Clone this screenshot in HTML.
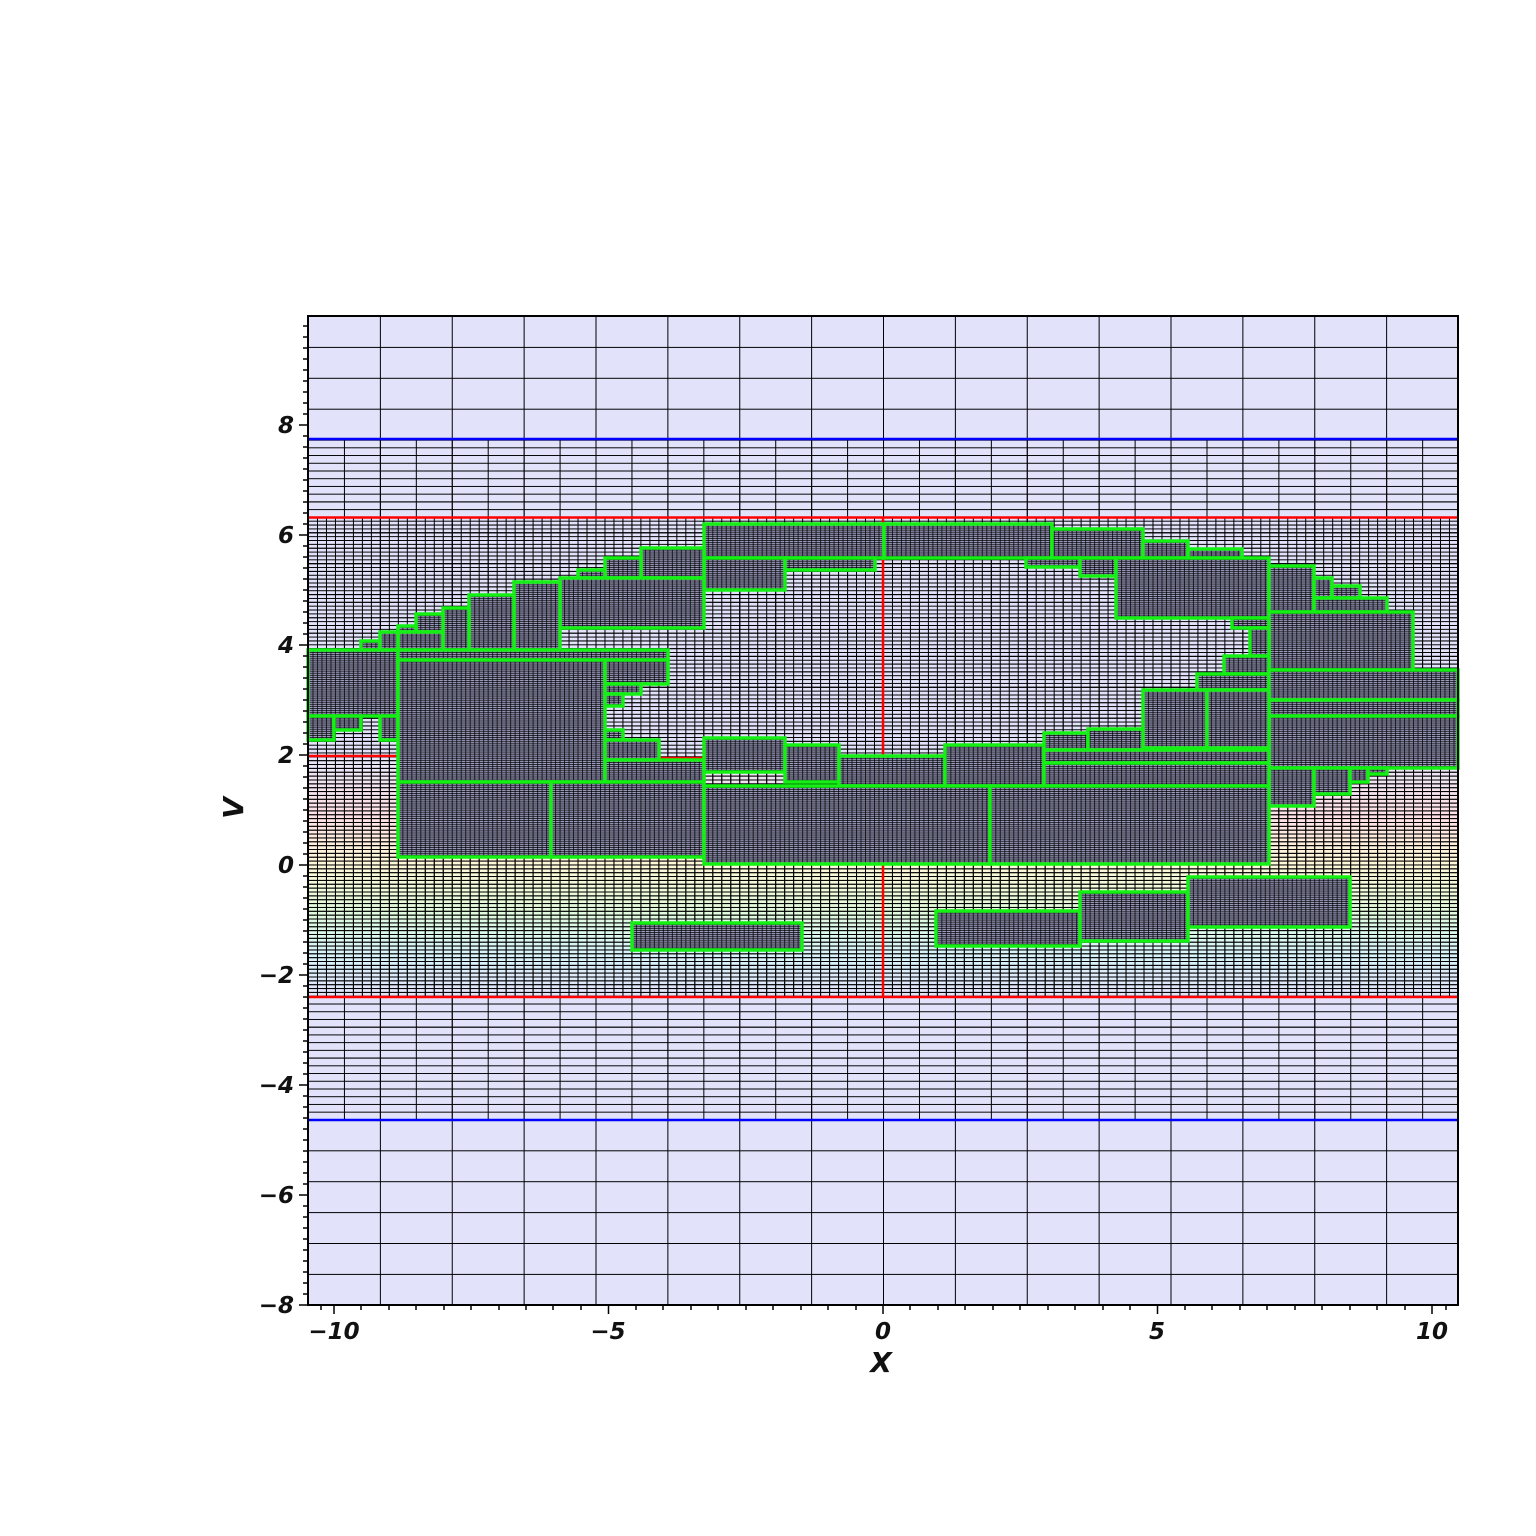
<!DOCTYPE html>
<html><head><meta charset="utf-8"><style>
html,body{margin:0;padding:0;background:#fff;}
svg{display:block}
text{font-family:"DejaVu Sans","Liberation Sans",sans-serif;font-weight:bold;font-style:italic;fill:#111}
</style></head><body>
<svg width="1536" height="1536" viewBox="0 0 1536 1536" xmlns="http://www.w3.org/2000/svg">
<defs>
<pattern id="pc" patternUnits="userSpaceOnUse" x="308" y="316" width="71.875" height="30.9">
<rect width="71.875" height="30.9" fill="#e2e2fb"/>
<path d="M0.5 0V30.9M0 0.5H71.875" stroke="#000" stroke-width="1.3" fill="none" shape-rendering="crispEdges"/>
</pattern>
<pattern id="pm" patternUnits="userSpaceOnUse" x="308" y="316" width="35.94" height="7.725">
<path d="M0.5 0V7.725M0 0.5H35.94" stroke="#000" stroke-width="1.2" fill="none" shape-rendering="crispEdges"/>
</pattern>
<pattern id="pf" patternUnits="userSpaceOnUse" x="308" y="316" width="8.984" height="3.8625">
<path d="M0.5 0V3.8625M0 0.5H8.984" stroke="#000" stroke-width="1.1" fill="none" shape-rendering="crispEdges"/>
</pattern>
<pattern id="pg" patternUnits="userSpaceOnUse" x="308" y="316" width="4.492" height="1.931">
<rect width="4.492" height="1.931" fill="#a0a0c4"/>
<path d="M0.5 0V1.931M0 0.5H4.492" stroke="#000" stroke-width="0.75" fill="none"/>
</pattern>
<linearGradient id="lg" x1="0" y1="755" x2="0" y2="997" gradientUnits="userSpaceOnUse">
<stop offset="0" stop-color="#e6e6fb"/>
<stop offset="0.25" stop-color="#ffe0e6"/>
<stop offset="0.45" stop-color="#fff8d8"/>
<stop offset="0.65" stop-color="#e0fbdc"/>
<stop offset="0.82" stop-color="#d8f4fb"/>
<stop offset="1" stop-color="#e2e2fb"/>
</linearGradient>
</defs>
<rect x="308" y="316" width="1150" height="989" fill="url(#pc)"/>
<rect x="308" y="439" width="1150" height="681" fill="url(#pm)"/>
<rect x="308" y="755" width="1150" height="242" fill="url(#lg)"/>
<rect x="308" y="755" width="1150" height="242" fill="url(#pf)"/>
<rect x="308" y="517" width="1150" height="480" fill="url(#pf)"/>
<g stroke="#ff0000" stroke-width="2.5" fill="none">
<path d="M308 517.5H1458M308 997H1458M883 517V997M308 756H400M660 758H704"/>
</g>
<g stroke="#0000ff" stroke-width="2.5"><path d="M308 439H1458M308 1120H1458"/></g>
<g fill="url(#pg)" stroke="#14f014" stroke-width="3.5">
<rect x="704" y="524" width="180" height="34"/>
<rect x="884" y="524" width="168" height="34"/>
<rect x="1052" y="529" width="91" height="29"/>
<rect x="1143" y="541" width="45" height="17"/>
<rect x="1188" y="549" width="54" height="9"/>
<rect x="704" y="558" width="81" height="32"/>
<rect x="785" y="558" width="90" height="12"/>
<rect x="1026" y="558" width="54" height="9"/>
<rect x="1080" y="558" width="36" height="18"/>
<rect x="1116" y="558" width="153" height="60"/>
<rect x="1232" y="618" width="37" height="10"/>
<rect x="1269" y="566" width="45" height="46"/>
<rect x="1314" y="578" width="18" height="20"/>
<rect x="1332" y="586" width="28" height="12"/>
<rect x="1314" y="598" width="73" height="14"/>
<rect x="1269" y="612" width="144" height="58"/>
<rect x="1250" y="628" width="19" height="28"/>
<rect x="1224" y="656" width="45" height="18"/>
<rect x="1197" y="674" width="72" height="16"/>
<rect x="1269" y="670" width="189" height="30"/>
<rect x="1269" y="700" width="189" height="16"/>
<rect x="1269" y="716" width="189" height="52"/>
<rect x="1143" y="690" width="64" height="58"/>
<rect x="1207" y="690" width="62" height="58"/>
<rect x="1269" y="768" width="45" height="38"/>
<rect x="1314" y="768" width="36" height="26"/>
<rect x="1350" y="768" width="18" height="14"/>
<rect x="1368" y="768" width="19" height="6"/>
<rect x="641" y="548" width="63" height="30"/>
<rect x="605" y="558" width="36" height="20"/>
<rect x="578" y="570" width="27" height="8"/>
<rect x="560" y="578" width="144" height="50"/>
<rect x="514" y="582" width="46" height="68"/>
<rect x="469" y="595" width="45" height="55"/>
<rect x="443" y="608" width="26" height="42"/>
<rect x="416" y="614" width="27" height="18"/>
<rect x="398" y="626" width="18" height="6"/>
<rect x="398" y="632" width="45" height="18"/>
<rect x="361" y="641" width="19" height="9"/>
<rect x="380" y="632" width="18" height="18"/>
<rect x="308" y="650" width="90" height="66"/>
<rect x="308" y="716" width="26" height="24"/>
<rect x="334" y="716" width="27" height="14"/>
<rect x="380" y="716" width="18" height="24"/>
<rect x="398" y="650" width="270" height="10"/>
<rect x="398" y="660" width="207" height="122"/>
<rect x="605" y="660" width="63" height="24"/>
<rect x="605" y="684" width="36" height="10"/>
<rect x="605" y="694" width="18" height="12"/>
<rect x="605" y="730" width="18" height="10"/>
<rect x="605" y="740" width="54" height="20"/>
<rect x="605" y="760" width="99" height="22"/>
<rect x="398" y="782" width="153" height="75"/>
<rect x="551" y="782" width="153" height="75"/>
<rect x="704" y="738" width="81" height="34"/>
<rect x="785" y="745" width="54" height="37"/>
<rect x="839" y="756" width="106" height="30"/>
<rect x="945" y="745" width="99" height="41"/>
<rect x="1044" y="733" width="44" height="17"/>
<rect x="1088" y="729" width="55" height="21"/>
<rect x="1044" y="750" width="225" height="13"/>
<rect x="1044" y="763" width="225" height="23"/>
<rect x="704" y="786" width="286" height="78"/>
<rect x="990" y="786" width="279" height="78"/>
<rect x="632" y="923" width="170" height="27"/>
<rect x="936" y="911" width="144" height="35"/>
<rect x="1080" y="892" width="108" height="49"/>
<rect x="1188" y="877" width="162" height="50"/>
</g>
<rect x="308" y="316" width="1150" height="989" fill="none" stroke="#000" stroke-width="2"/>
<g stroke="#000" stroke-width="1.5">
<path d="M299 425H308M299 535H308M299 645H308M299 755H308M299 865H308M299 975H308M299 1085H308M299 1195H308M299 1305H308"/>
<path d="M303 326H308M303 337H308M303 348H308M303 359H308M303 370H308M303 381H308M303 392H308M303 403H308M303 414H308M303 436H308M303 447H308M303 458H308M303 469H308M303 480H308M303 491H308M303 502H308M303 513H308M303 524H308M303 546H308M303 557H308M303 568H308M303 579H308M303 590H308M303 601H308M303 612H308M303 623H308M303 634H308M303 656H308M303 667H308M303 678H308M303 689H308M303 700H308M303 711H308M303 722H308M303 733H308M303 744H308M303 766H308M303 777H308M303 788H308M303 799H308M303 810H308M303 821H308M303 832H308M303 843H308M303 854H308M303 876H308M303 887H308M303 898H308M303 909H308M303 920H308M303 931H308M303 942H308M303 953H308M303 964H308M303 986H308M303 997H308M303 1008H308M303 1019H308M303 1030H308M303 1041H308M303 1052H308M303 1063H308M303 1074H308M303 1096H308M303 1107H308M303 1118H308M303 1129H308M303 1140H308M303 1151H308M303 1162H308M303 1173H308M303 1184H308M303 1206H308M303 1217H308M303 1228H308M303 1239H308M303 1250H308M303 1261H308M303 1272H308M303 1283H308M303 1294H308"/>
<path d="M334 1305V1314M608.5 1305V1314M883 1305V1314M1157.5 1305V1314M1432 1305V1314"/>
<path d="M321 1305V1310M361 1305V1310M389 1305V1310M416 1305V1310M444 1305V1310M471 1305V1310M499 1305V1310M526 1305V1310M553 1305V1310M581 1305V1310M636 1305V1310M663 1305V1310M691 1305V1310M718 1305V1310M746 1305V1310M773 1305V1310M801 1305V1310M828 1305V1310M856 1305V1310M910 1305V1310M938 1305V1310M965 1305V1310M993 1305V1310M1020 1305V1310M1048 1305V1310M1075 1305V1310M1103 1305V1310M1130 1305V1310M1185 1305V1310M1212 1305V1310M1240 1305V1310M1267 1305V1310M1295 1305V1310M1322 1305V1310M1350 1305V1310M1377 1305V1310M1405 1305V1310M1446 1305V1310"/>
</g>
<g font-size="23" text-anchor="end">
<text x="294" y="433">8</text>
<text x="294" y="543">6</text>
<text x="294" y="653">4</text>
<text x="294" y="763">2</text>
<text x="294" y="873">0</text>
<text x="294" y="983">−2</text>
<text x="294" y="1093">−4</text>
<text x="294" y="1203">−6</text>
<text x="294" y="1313">−8</text>
</g>
<g font-size="23" text-anchor="middle">
<text x="334" y="1339">−10</text>
<text x="608" y="1339">−5</text>
<text x="883" y="1339">0</text>
<text x="1157" y="1339">5</text>
<text x="1432" y="1339">10</text>
<text x="881" y="1372" font-size="28">X</text>
<text x="0" y="0" font-size="28" transform="translate(243,808) rotate(-90)">V</text>
</g>
</svg>
</body></html>
